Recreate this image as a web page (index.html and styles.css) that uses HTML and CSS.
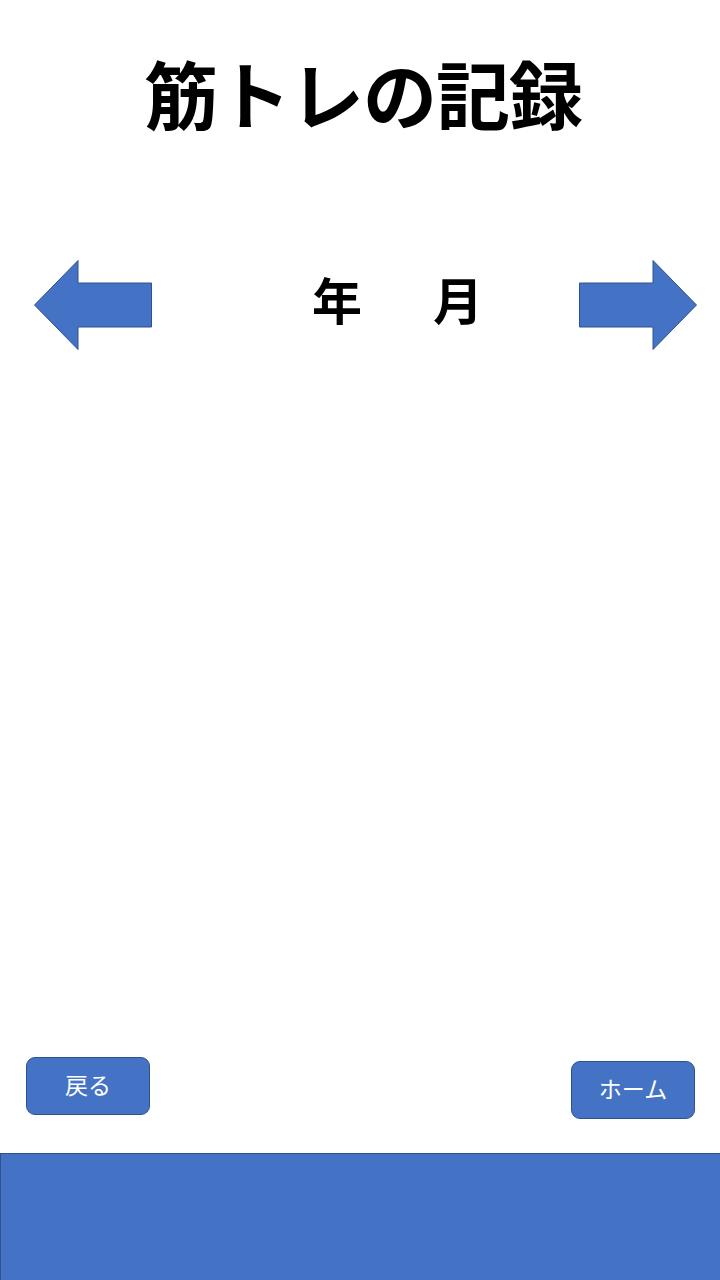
FILE: index.html
```html
<!DOCTYPE html>
<html lang="ja">
<head>
<meta charset="utf-8">
<title>筋トレの記録</title>
<link rel="stylesheet" href="styles.css">
</head>
<body>
<div class="page">
  <h1 class="title">筋トレの記録</h1>
  <div class="month-nav">
    <svg class="arrow" width="118" height="90" viewBox="0 0 118 90">
      <polygon points="0.5,45 44,0.5 44,23 117.5,23 117.5,67 44,67 44,89.5" fill="#4472C4" stroke="#2F528F" stroke-width="1"/>
    </svg>
    <div class="ym"><span>年</span><span>月</span></div>
    <svg class="arrow arrow-right" width="118" height="90" viewBox="0 0 118 90">
      <polygon points="117.5,45 74,0.5 74,23 0.5,23 0.5,67 74,67 74,89.5" fill="#4472C4" stroke="#2F528F" stroke-width="1"/>
    </svg>
  </div>
  <div class="spacer"></div>
  <div class="actions">
    <button class="btn">戻る</button>
    <button class="btn btn-home">ホーム</button>
  </div>
  <footer class="footer"></footer>
</div>
</body>
</html>
```
FILE: styles.css
```css
html, body {
  margin: 0;
  padding: 0;
  background: #ffffff;
}
body {
  font-family: "Noto Sans CJK JP", "Noto Sans", sans-serif;
}
.page {
  width: 720px;
  height: 1280px;
  display: flex;
  flex-direction: column;
}
.title {
  margin: 55px 0 0 0;
  font-size: 74px;
  line-height: 74px;
  font-weight: 700;
  text-align: center;
  color: #000;
  letter-spacing: -1px;
  padding-left: 6px;
}
.month-nav {
  margin-top: 131px;
  display: flex;
  align-items: center;
  padding: 0 23px 0 34px;
}
.arrow {
  display: block;
  flex: none;
}
.arrow-right {
  margin-left: auto;
}
.ym {
  margin-left: 160px;
  margin-bottom: 14px;
  display: flex;
  gap: 71px;
  font-size: 50px;
  line-height: 50px;
  font-weight: 700;
  color: #000;
}
.spacer {
  flex: 1;
}
.actions {
  display: flex;
  justify-content: space-between;
  align-items: flex-start;
  padding: 0 25px 0 26px;
  height: 62px;
  margin-bottom: 34px;
}
.btn {
  width: 124px;
  height: 58px;
  box-sizing: border-box;
  background: #4472C4;
  border: 1px solid #2F528F;
  border-radius: 9px;
  color: #ffffff;
  font-family: "Noto Sans CJK JP", sans-serif;
  font-size: 23px;
  line-height: 1;
  padding: 0 0 3px 0;
  display: flex;
  align-items: center;
  justify-content: center;
}
.btn-home {
  margin-top: 4px;
}
.footer {
  height: 127px;
  box-sizing: border-box;
  background: #4472C4;
  border-top: 1px solid #2F528F;
  border-left: 1px solid #2F528F;
}
```
